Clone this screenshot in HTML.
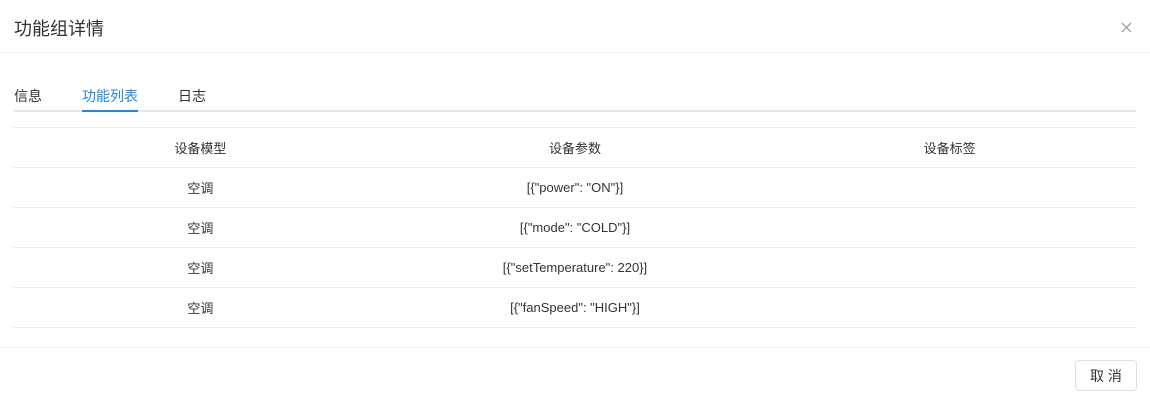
<!DOCTYPE html>
<html><head><meta charset="utf-8"><style>
body{margin:0;width:1150px;height:403px;background:#fff;font-family:"Liberation Sans","Noto Sans CJK SC",sans-serif;color:#333;position:relative;overflow:hidden}
.title{position:absolute;left:14px;top:15px;font-size:18px;color:#303133}
.close{position:absolute;left:1121px;top:22px}
.hl{position:absolute;left:0;width:1150px;height:1px;background:#f0f0f3}
.tab{position:absolute;top:86px;font-size:14px;color:#303133}
.tbar{position:absolute;left:14px;top:110px;width:1122px;height:2px;background:#e4e7ed}
.act{position:absolute;left:82px;top:110px;width:56px;height:2px;background:#1e88e5}
table{position:absolute;left:13px;top:127px;width:1124px;border-collapse:collapse;font-size:13px;color:#333}
td{height:39px;border-top:1px solid #ebeef5;text-align:center;width:33.33%;padding:0}
tr:last-child td{border-bottom:1px solid #ebeef5}
.btn{position:absolute;left:1075px;top:360px;width:62px;height:31px;border:1px solid #dcdfe6;border-radius:4px;box-sizing:border-box;font-size:14px;text-align:center;line-height:30px;color:#333}
</style></head><body>
<div class="title">功能组详情</div>
<svg class="close" width="11" height="11" viewBox="0 0 11 11"><path d="M1 1L10 10M10 1L1 10" stroke="#909399" stroke-width="1.2"/></svg>
<div class="hl" style="top:52px"></div>
<div class="tab" style="left:14px">信息</div>
<div class="tab" style="left:82px;color:#1e88e5">功能列表</div>
<div class="tab" style="left:178px">日志</div>
<div class="tbar"></div><div class="act"></div>
<table>
<tr><td>设备模型</td><td>设备参数</td><td>设备标签</td></tr>
<tr><td>空调</td><td>[{"power": "ON"}]</td><td></td></tr>
<tr><td>空调</td><td>[{"mode": "COLD"}]</td><td></td></tr>
<tr><td>空调</td><td>[{"setTemperature": 220}]</td><td></td></tr>
<tr><td>空调</td><td>[{"fanSpeed": "HIGH"}]</td><td></td></tr>
</table>
<div class="hl" style="top:347px"></div>
<div class="btn">取 消</div>
</body></html>
